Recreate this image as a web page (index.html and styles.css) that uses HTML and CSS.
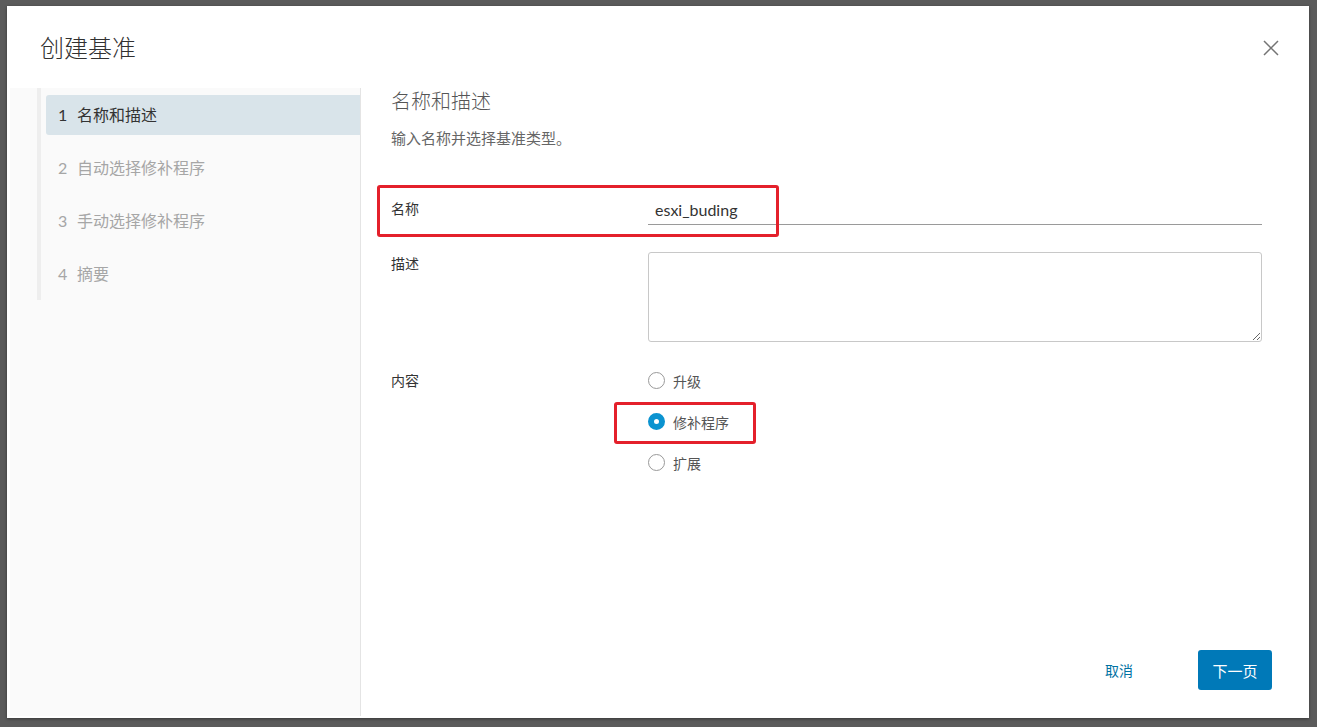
FILE: index.html
```html
<!DOCTYPE html>
<html lang="zh-CN">
<head>
    <meta charset="UTF-8">
    <title>创建基准</title>
    <link rel="stylesheet" href="styles.css">
</head>
<body>

<div class="modal">

    <div class="modal-header">
        <h1>创建基准</h1>
        <button class="close-btn" aria-label="关闭">
            <svg width="16" height="16" viewBox="0 0 16 16">
                <path d="M1 1 L15 15 M15 1 L1 15" stroke="#747474" stroke-width="1.5" fill="none"/>
            </svg>
        </button>
    </div>

    <div class="modal-body">
        <div class="sidebar">
            <ul class="steps">
                <li class="step active"><span class="num">1</span>名称和描述</li>
                <li class="step"><span class="num">2</span>自动选择修补程序</li>
                <li class="step"><span class="num">3</span>手动选择修补程序</li>
                <li class="step"><span class="num">4</span>摘要</li>
            </ul>
        </div>

        <div class="main">
            <h2>名称和描述</h2>
            <p class="subtitle">输入名称并选择基准类型。</p>

            <div class="form">
                <div class="form-row">
                    <label for="name">名称</label>
                    <input type="text" id="name" value="esxi_buding">
                </div>

                <div class="form-row row-desc">
                    <label for="desc">描述</label>
                    <textarea id="desc"></textarea>
                </div>

                <div class="form-row row-content">
                    <label>内容</label>
                    <div class="radios">
                        <label class="radio"><span class="dot"></span>升级</label>
                        <label class="radio checked"><span class="dot"></span>修补程序</label>
                        <label class="radio"><span class="dot"></span>扩展</label>
                    </div>
                </div>
            </div>

            <div class="footer">
                <button class="btn-link">取消</button>
                <button class="btn-primary">下一页</button>
            </div>

            <div class="mark mark-name"></div>
            <div class="mark mark-radio"></div>
        </div>
    </div>
</div>

</body>
</html>
```

FILE: styles.css
```css
* {
    box-sizing: border-box;
}

body {
    margin: 0;
    height: 727px;
    padding: 6px 8px 9px 7px;
    background-color: #5b5b5b;
    font-family: Lato, "Noto Sans", "Noto Sans CJK SC", sans-serif;
    color: #333;
    overflow: hidden;
}

.modal {
    height: 712px;
    width: 1302px;
    background: #fff;
    display: flex;
    flex-direction: column;
    box-shadow: 0 1px 3px rgba(0,0,0,0.4);
}

.modal-header {
    height: 82px;
    display: flex;
    align-items: center;
    justify-content: space-between;
    padding: 0 30px 0 33px;
}

.modal-header h1 {
    margin: 0;
    font-size: 24px;
    font-weight: 300;
    color: #313131;
    line-height: 30px;
    padding-top: 2px;
}

.close-btn {
    border: none;
    background: none;
    padding: 0;
    width: 16px;
    height: 16px;
    margin-top: 1px;
    cursor: pointer;
}

.modal-body {
    flex: 1;
    display: flex;
    padding: 0 0 2px 3px;
}

.sidebar {
    width: 351px;
    background: #fafafa;
    border-right: 1px solid #e4e4e4;
}

.steps {
    list-style: none;
    margin: 0 0 0 27px;
    padding: 7px 0 6px 5px;
    border-left: 4px solid #eeeeee;
}

.step {
    height: 40px;
    line-height: 40px;
    padding-left: 12px;
    margin-bottom: 13px;
    font-size: 16px;
    color: #a6a6a6;
    border-radius: 3px 0 0 3px;
}

.step:last-child {
    margin-bottom: 0;
}

.step .num {
    display: inline-block;
    width: 19px;
}

.step.active {
    background: #d9e4ea;
    color: #333;
}

.main {
    flex: 1;
    position: relative;
    display: flex;
    flex-direction: column;
    padding: 0 47px 26px 30px;
}

.main h2 {
    margin: 0;
    font-size: 20px;
    font-weight: 300;
    line-height: 26px;
    color: #555;
}

.subtitle {
    margin: 14px 0 0;
    font-size: 15px;
    line-height: 20px;
    color: #666;
}

.form {
    margin-top: 46px;
}

.form-row {
    display: grid;
    grid-template-columns: 257px 1fr;
}

.form-row > label {
    font-size: 14px;
    line-height: 30px;
    color: #333;
}

.form-row input {
    height: 31px;
    border: none;
    border-bottom: 1px solid #9a9a9a;
    padding: 0 7px;
    font-family: Lato, "Noto Sans", sans-serif;
    font-size: 16px;
    color: #333;
    outline: none;
}

.row-desc {
    margin-top: 27px;
}

.row-desc > label {
    line-height: 20px;
    padding-top: 2px;
}

textarea {
    height: 90px;
    border: 1px solid #c8c8c8;
    border-radius: 3px;
    resize: vertical;
}

.row-content {
    margin-top: 19px;
}

.row-content > label {
    line-height: 20px;
    margin-top: 10px;
}

.radios {
    display: flex;
    flex-direction: column;
}

.radio {
    display: flex;
    align-items: center;
    height: 41px;
    font-size: 14px;
    color: #555;
}

.radio:first-child {
    margin-top: -1px;
}

.radio .dot {
    width: 17px;
    height: 17px;
    border: 1px solid #999;
    border-radius: 50%;
    margin-right: 8px;
    background: #fff;
}

.radio.checked .dot {
    border: 6px solid #0b93d0;
    background: #fff;
}

.footer {
    margin-top: auto;
    margin-right: -10px;
    display: flex;
    justify-content: flex-end;
    align-items: center;
}

.btn-link {
    height: 40px;
    padding: 0 12px;
    margin-right: 53px;
    border: none;
    background: none;
    color: #0072a3;
    font-size: 14px;
    font-family: inherit;
    cursor: pointer;
}

.btn-primary {
    height: 40px;
    width: 74px;
    border: none;
    border-radius: 3px;
    background: #0079b8;
    color: #fff;
    font-size: 15px;
    font-family: inherit;
    cursor: pointer;
}

/* red annotation boxes over the form */
.mark {
    position: absolute;
    border: 3px solid #e4202b;
    border-radius: 3px;
}

.mark-name {
    left: 16px;
    top: 97px;
    width: 402px;
    height: 52px;
}

.mark-radio {
    left: 253px;
    top: 314px;
    width: 142px;
    height: 42px;
}
```
